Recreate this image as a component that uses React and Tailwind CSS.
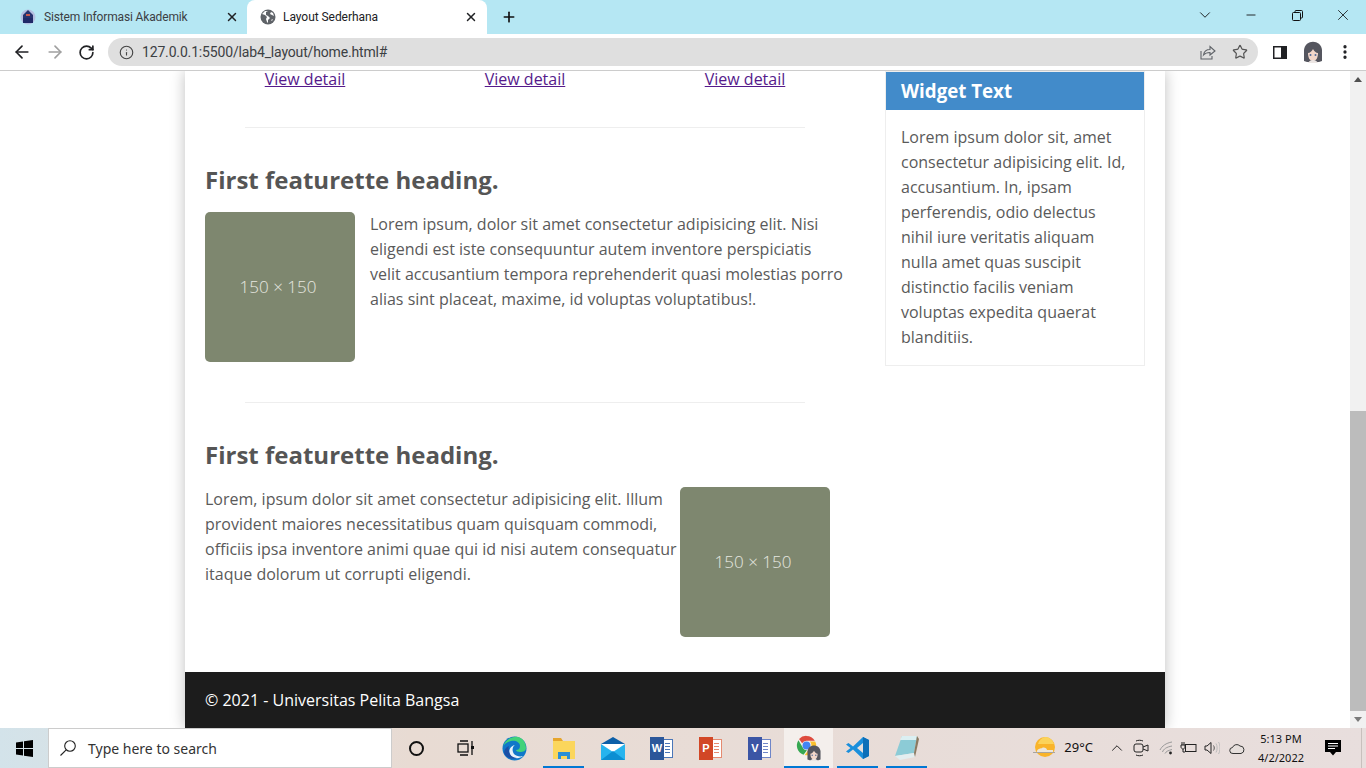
import React from 'react';
import { ArrowLeft, ArrowRight, RotateCw, Info, Star, X, Plus, Minus, ChevronDown, ChevronUp, EllipsisVertical } from 'lucide-react';

const Avatar = ({ size = 22 }) => (
	<svg width={size} height={size} viewBox="0 0 22 22">
		<path d="M2 20V9C3 -2 19 -2 20 9v11l-3 1H5z" fill="#55565f" />
		<path d="M6 12c2 0 4-2 5-4 1 2 3 4 5 4 0 5-2 8-5 8s-5-3-5-8z" fill="#f2d6c9" />
		<path d="M6 22c1-2 3-3 5-3s4 1 5 3z" fill="#ece6e4" />
		<circle cx="8.500" cy="14" r="1" fill="#4f6a9a" />
		<circle cx="13.500" cy="14" r="1" fill="#4f6a9a" />
	</svg>
);

const Globe = () => (
	<svg width="16" height="16" viewBox="0 0 16 16">
		<circle cx="8" cy="8" r="7.500" fill="#5f6368" />
		<path d="M2 5l3 1 2 2-1 2 1 3 1 1V11l2-2-2-2-2-1V3l2-1H5zM11 3l-1 2 2 1 2 1-1-3zM11 11l1 1 1-2z" fill="#fff" />
	</svg>
);

const CampusLogo = () => (
	<svg width="16" height="16" viewBox="0 0 16 16">
		<circle cx="8" cy="8" r="7.500" fill="#b4bfe0" />
		<path d="M8 1L3 6v3h10V6z" fill="#28336e" />
		<rect x="3" y="9" width="10" height="5" fill="#202a68" />
		<rect x="6" y="5" width="4" height="2" fill="#c9584e" />
	</svg>
);

const ShareIcon = () => (
	<svg width="16" height="16" viewBox="0 0 16 16" fill="none" stroke="#5f6368" strokeWidth="1.100">
		<path d="M1 7v8h11v-3" />
		<path d="M3.500 11c.5-3 3-5.500 6.500-5.500V2.500l5 4.500-5 4V8.500c-3 0-5 .8-6.500 2.500z" />
	</svg>
);

const SidePanelIcon = () => (
	<svg width="14" height="13" viewBox="0 0 14 13">
		<rect width="14" height="13" fill="#202124" />
		<rect x="1.500" y="1.500" width="6.500" height="10" fill="#fff" />
	</svg>
);

const RestoreIcon = () => (
	<svg width="11" height="11" viewBox="0 0 11 11" fill="none" stroke="#111" strokeWidth="1">
		<rect x="0.500" y="2.500" width="8" height="8" rx="1" />
		<path d="M3 2.500V1.500a1 1 0 011-1h5.500a1 1 0 011 1V7a1 1 0 01-1 1h-1" />
	</svg>
);

const WindowsLogo = () => (
	<svg width="17" height="17" viewBox="0 0 17 17" fill="#000">
		<path d="M0 2.400L7 1.400V8H0zM8 1.200L17 0V8H8zM0 9h7v6.600l-7-1zM8 9h9v8l-9-1.200z" />
	</svg>
);

const SearchGlass = () => (
	<svg width="16" height="16" viewBox="0 0 16 16" fill="none" stroke="#222" strokeWidth="1.100">
		<circle cx="10" cy="6" r="5.300" />
		<path d="M6.200 9.800L0.500 15.500" />
	</svg>
);

const TaskView = () => (
	<svg width="18" height="16" viewBox="0 0 18 16" fill="none" stroke="#111" strokeWidth="1.300">
		<rect x="1" y="4" width="10" height="8" />
		<path d="M3 1h8M3 15h8M15 1v14" />
		<rect x="14" y="6" width="3" height="3" fill="#111" stroke="none" />
	</svg>
);

const EdgeIcon = () => (
	<svg width="25" height="25" viewBox="0 0 25 25">
		<circle cx="12.500" cy="12.500" r="12" fill="#0f78c9" />
		<path d="M1 11C3 3 11 0 16 1c5 1 8 6 8 11 0 3-3 4-6 4-2 0-4-1-4-2 2 0 4-1 4-4 0-4-5-6-9-5C5 6 2 8 1 11z" fill="#41d27a" />
		<path d="M8 19c-2-4 0-9 5-10-3 2-3 6-1 9 2 2 6 3 9 2-3 3-10 3-13-1z" fill="#fff" opacity=".9" />
		<path d="M7 14c0 5 4 8 8 8-5 2-11 0-13-5 0-3 2-6 5-7-1 2 0 3 0 4z" fill="#1b4fa5" />
	</svg>
);

const FolderIcon = () => (
	<svg width="22" height="21" viewBox="0 0 22 21">
		<path d="M0 0h8l2 3H0z" fill="#e6a52c" />
		<rect y="3" width="22" height="18" fill="#fbd65c" />
		<path d="M5 21v-7h12v7h-3v-3H8v3z" fill="#2a8fd6" />
	</svg>
);

const MailIcon = () => (
	<svg width="24" height="23" viewBox="0 0 24 23">
		<path d="M0 7L12 0l12 7v1H0z" fill="#0c5fa8" />
		<path d="M0 7h24v16H0z" fill="#27b4ee" />
		<path d="M0 7l12 8 12-8z" fill="#fff" />
		<path d="M0 23l12-9 12 9z" fill="#0c8ed2" />
	</svg>
);

// Word, PowerPoint and Visio share the same tile shape
const OfficeIcon = ({ letter, tile, sheet, line }) => (
	<div className="relative w-[23px] h-[23px]">
		<div className={`absolute right-0 top-[2px] w-[15px] h-[19px] bg-white border ${sheet} flex flex-col items-end justify-center gap-[2px] pr-[2px]`}>
			<div className={`w-[5px] h-[1px] ${line}`} />
			<div className={`w-[5px] h-[1px] ${line}`} />
			<div className={`w-[5px] h-[1px] ${line}`} />
			<div className={`w-[5px] h-[1px] ${line}`} />
		</div>
		<div className={`absolute left-0 top-0 w-[14px] h-[23px] ${tile} text-white text-[11px] font-bold flex items-center justify-center font-['Liberation_Sans',sans-serif]`}>
			{letter}
		</div>
	</div>
);

const ChromeIcon = () => (
	<div className="relative w-[26px] h-[26px]">
		<svg width="21" height="21" viewBox="0 0 24 24" className="absolute left-0 top-0">
			<path d="M12 1a11 11 0 019.500 5.500H12a5.500 5.500 0 00-5 3L3.500 4.500A11 11 0 0112 1z" fill="#de4b3e" />
			<path d="M2.800 6L7.500 14a5.500 5.500 0 005 3.400L8.600 22.500A11 11 0 012.800 6z" fill="#36a852" />
			<path d="M22 7.500a11 11 0 01-12 15.400l4.800-6.600a5.500 5.500 0 001-8.800z" fill="#fbc02d" />
			<circle cx="12" cy="12" r="4.500" fill="#4285f4" />
		</svg>
		<div className="absolute right-0 bottom-0">
			<Avatar size={16} />
		</div>
	</div>
);

const VSCodeIcon = () => (
	<svg width="24" height="24" viewBox="0 0 24 24">
		<path d="M17 1l6 3v16l-6 3-10-9.500L2.500 17 0 15.500 4.500 12 0 8.500 2.500 7 7 10.500z" fill="#1a8fdc" />
		<path d="M17 1l6 3v16l-6 3z" fill="#0d6fb8" />
		<path d="M17 7v10l-6-5z" fill="#e6e0de" />
	</svg>
);

const NotepadIcon = () => (
	<svg width="25" height="24" viewBox="0 0 25 24">
		<path d="M8 0h15l-3 17L1 20z" fill="#8ccbd6" />
		<path d="M8 0h15l-1 4L6 4z" fill="#dbeff2" />
		<path d="M1 20l19-3 1 4-15 3z" fill="#e3eef0" />
		<path d="M23 0l2 3-4 18-1-4z" fill="#8a7a62" />
	</svg>
);

const WeatherIcon = () => (
	<svg width="22" height="22" viewBox="0 0 22 22">
		<circle cx="12" cy="10" r="10" fill="#f9b42a" />
		<path d="M12 0a10 10 0 019 7H5a10 10 0 017-7z" fill="#fbd35a" />
		<path d="M0 15h22v1H0z" fill="#a9a49c" />
		<path d="M4 14c1-3 4-2 5-3 2-1 5 0 5 2h6v2H4z" fill="#ebe6dc" />
	</svg>
);

const MeetIcon = () => (
	<svg width="16" height="18" viewBox="0 0 16 18" fill="none" stroke="#222" strokeWidth="1">
		<rect x="1" y="5" width="9" height="8" rx="2" />
		<path d="M10 8l5-2v6l-5-2M3 2c2-1 5-1 7 0M3 16c2 1 5 1 7 0" />
	</svg>
);

const WifiIcon = () => (
	<svg width="14" height="14" viewBox="0 0 14 14" fill="none" stroke="#999" strokeWidth="1">
		<path d="M1 9c2-4 6-7 12-8M3.500 11c1-3 4-5 9.500-6M6 12.500c1-2 3-3 7-4" />
		<circle cx="11.500" cy="12" r="1.400" fill="#222" stroke="none" />
	</svg>
);

const BatteryIcon = () => (
	<svg width="17" height="12" viewBox="0 0 17 12" fill="none" stroke="#222" strokeWidth="1">
		<rect x="5.500" y="2.500" width="10.500" height="7" />
		<path d="M1 3v2c0 1 1 2 2 2s2-1 2-2V3zM2 0v3M4 0v3M3 7v3h2" />
	</svg>
);

const VolumeIcon = () => (
	<svg width="16" height="14" viewBox="0 0 16 14" fill="none" stroke="#222" strokeWidth="1">
		<path d="M1 5v4h2l4 3.500v-11L3 5z" />
		<path d="M9.500 4.500c1 1.500 1 3.500 0 5" stroke="#555" />
		<path d="M12 2.500c1.500 2.500 1.500 6.500 0 9M14.500 1c2 3 2 9 0 12" stroke="#bbb" />
	</svg>
);

const CloudIcon = () => (
	<svg width="16" height="11" viewBox="0 0 16 11" fill="#e6dfdc" stroke="#333" strokeWidth="1">
		<path d="M4 10.500a3 3 0 01-.5-6A4.500 4.500 0 0111 3a3.800 3.800 0 011 7.500z" />
	</svg>
);

const NotificationIcon = () => (
	<svg width="16" height="16" viewBox="0 0 16 16">
		<path d="M0 0h16v12h-5l-3 3.500L5 12H0z" fill="#000" />
		<path d="M3 3.500h10M3 6h10M3 8.500h7" stroke="#fff" strokeWidth="1" />
	</svg>
);

const Placeholder = () => (
	<div className="w-[150px] h-[150px] shrink-0 bg-[#7e876f] rounded-[5px] flex items-center justify-center pr-[4px] pb-[2px] text-[#e6e8e0] text-[17px] font-light">
		150 × 150
	</div>
);

const Featurette = ({ children }) => (
	<>
		<hr className="w-[560px] mx-auto border-0 border-t border-[#eeeeee]" />
		<h2 className="mt-[37px] mb-[18px] text-[24px] leading-[29px] font-bold text-[#555555]">First featurette heading.</h2>
		{children}
	</>
);

const TaskItem = ({ active, open, children }) => (
	<div className={`w-[49px] h-full relative flex items-center justify-center ${active ? 'bg-[#f4efec]' : ''}`}>
		{children}
		{open && <div className={`absolute bottom-0 right-[4px] h-[2px] bg-[#0078d4] ${active ? 'left-0' : 'left-[4px]'}`} />}
	</div>
);

export default function App() {
	return (
		<div className="h-screen w-[1366px] overflow-hidden flex flex-col bg-white font-['Open_Sans',sans-serif]">
			{/* tab strip */}
			<div className="h-[34px] shrink-0 bg-[#b5e7f3] flex items-end text-[12px] text-[#202124] font-['Roboto',sans-serif]">
				<div className="w-[247px] h-[34px] flex items-center pl-[20px] pr-[8px]">
					<CampusLogo />
					<span className="ml-[8px] flex-1 text-[#3c4043] tracking-[-0.15px]">Sistem Informasi Akademik</span>
					<X size={14} strokeWidth={2.5} />
				</div>
				<div className="w-[240px] h-[34px] bg-white rounded-t-[8px] flex items-center pl-[13px] pr-[9px]">
					<Globe />
					<span className="ml-[7px] flex-1 tracking-[-0.05px]">Layout Sederhana</span>
					<X size={14} strokeWidth={2.5} />
				</div>
				<div className="h-[34px] w-[44px] flex items-center justify-center">
					<Plus size={16} strokeWidth={2.5} color="#111" />
				</div>
				<div className="flex-1 h-[30px] self-start flex items-center justify-end">
					<div className="w-[46px] flex justify-center"><ChevronDown size={18} strokeWidth={1.2} color="#111" /></div>
					<div className="w-[46px] flex justify-center"><Minus size={14} strokeWidth={1.5} color="#111" /></div>
					<div className="w-[46px] flex justify-center"><RestoreIcon /></div>
					<div className="w-[46px] flex justify-center"><X size={18} strokeWidth={1.1} color="#111" /></div>
				</div>
			</div>

			{/* toolbar */}
			<div className="h-[37px] shrink-0 border-b border-[#cccccc] flex items-center">
				<div className="w-[108px] flex items-center pl-[12px]">
					<ArrowLeft size={20} strokeWidth={2} color="#202124" />
					<ArrowRight size={20} strokeWidth={2} color="#a0a0a0" className="ml-[13px]" />
					<RotateCw size={17} strokeWidth={2.4} color="#202124" className="ml-[13px]" />
				</div>
				<div className="w-[1150px] h-[28px] bg-[#dfdfdf] rounded-full flex items-center pl-[11px] pr-[10px] text-[14px] text-[#3c4043] font-['Roboto',sans-serif]">
					<Info size={15} strokeWidth={1.8} color="#444" />
					<span className="ml-[8px] flex-1 tracking-[-0.16px]">127.0.0.1:5500/lab4_layout/home.html#</span>
					<ShareIcon />
					<Star size={16} strokeWidth={1.8} color="#555" className="ml-[16px]" />
				</div>
				<div className="flex-1 flex items-center pl-[15px]">
					<SidePanelIcon />
					<div className="ml-[15px]"><Avatar /></div>
					<EllipsisVertical size={18} strokeWidth={2.4} color="#202124" className="ml-[12px]" />
				</div>
			</div>

			{/* page + scrollbar */}
			<div className="h-[657px] shrink-0 flex">
				<div className="w-[1350px] overflow-hidden">
					<div className="w-[980px] mx-auto bg-white shadow-[0_0_14px_rgba(0,0,0,0.25)] h-full flex flex-col text-[16px] leading-[25px] text-[#5a5a5a]">
						<div className="flex flex-1">
							<main className="w-[640px] ml-[20px]">
								<div className="-mx-[10px] grid grid-cols-3 text-center leading-[17px] mb-[39px]">
									<a href="#" className="underline text-[#551a8b]">View detail</a>
									<a href="#" className="underline text-[#551a8b]">View detail</a>
									<a href="#" className="underline text-[#551a8b]">View detail</a>
								</div>
								<Featurette>
									<div className="flex gap-[15px]">
										<Placeholder />
										<p>Lorem ipsum, dolor sit amet consectetur adipisicing elit. Nisi eligendi est iste consequuntur autem inventore perspiciatis velit accusantium tempora reprehenderit quasi molestias porro alias sint placeat, maxime, id voluptas voluptatibus!.</p>
									</div>
								</Featurette>
								<div className="mt-[40px]">
									<Featurette>
										<div className="flex pr-[15px]">
											<p className="flex-1">Lorem, ipsum dolor sit amet consectetur adipisicing elit. Illum provident maiores necessitatibus quam quisquam commodi, officiis ipsa inventore animi quae qui id nisi autem consequatur itaque dolorum ut corrupti eligendi.</p>
											<Placeholder />
										</div>
									</Featurette>
								</div>
							</main>
							<aside className="w-[260px] ml-[40px] self-start border border-[#eeeeee]">
								<h3 className="h-[38px] bg-[#428bca] text-white text-[18.72px] font-bold pl-[15px] pb-[1px] flex items-center">Widget Text</h3>
								<p className="p-[15px]">Lorem ipsum dolor sit, amet consectetur adipisicing elit. Id, accusantium. In, ipsam perferendis, odio delectus nihil iure veritatis aliquam nulla amet quas suscipit distinctio facilis veniam voluptas expedita quaerat blanditiis.</p>
							</aside>
						</div>
						<footer className="h-[56px] shrink-0 bg-[#1c1c1c] text-white flex items-center pl-[20px]">© 2021 - Universitas Pelita Bangsa</footer>
					</div>
				</div>
				<div className="w-[16px] bg-[#f1f1f1] flex flex-col items-center">
					<div className="h-[340px] w-full">
						<div className="w-0 h-0 mx-auto mt-[6px] border-x-[4px] border-x-transparent border-b-[5px] border-b-[#505050]" />
					</div>
					<div className="w-full h-[300px] bg-[#bcbcbc]" />
					<div className="flex-1 w-full flex items-end pb-[6px]">
						<div className="w-0 h-0 mx-auto border-x-[4px] border-x-transparent border-t-[5px] border-t-[#7a7a7a]" />
					</div>
				</div>
			</div>

			{/* taskbar */}
			<div className="h-[40px] shrink-0 flex items-center bg-gradient-to-r from-[#d3e3ea] via-[#e8dbd3] via-30% to-[#e8dedd] font-['Noto_Sans',sans-serif] text-[#111]">
				<div className="w-[48px] flex justify-center"><WindowsLogo /></div>
				<div className="w-[344px] h-full bg-white border border-[#cccccc] flex items-center pl-[11px] text-[14px] text-[#333]">
					<SearchGlass />
					<span className="ml-[12px]">Type here to search</span>
				</div>
				<div className="flex h-full">
					<TaskItem><div className="w-[15px] h-[15px] rounded-full border-2 border-[#111]" /></TaskItem>
					<TaskItem><TaskView /></TaskItem>
					<TaskItem><EdgeIcon /></TaskItem>
					<TaskItem open><FolderIcon /></TaskItem>
					<TaskItem><MailIcon /></TaskItem>
					<TaskItem><OfficeIcon letter="W" tile="bg-[#2b579a]" sheet="border-[#4a76b8]" line="bg-[#4a76b8]" /></TaskItem>
					<TaskItem><OfficeIcon letter="P" tile="bg-[#d24726]" sheet="border-[#e58a70]" line="bg-[#e58a70]" /></TaskItem>
					<TaskItem><OfficeIcon letter="V" tile="bg-[#3b55a5]" sheet="border-[#6f86c8]" line="bg-[#6f86c8]" /></TaskItem>
					<TaskItem active open><ChromeIcon /></TaskItem>
					<TaskItem open><VSCodeIcon /></TaskItem>
					<TaskItem open><NotepadIcon /></TaskItem>
				</div>
				<div className="flex-1 h-full flex items-center justify-end">
					<WeatherIcon />
					<span className="ml-[9px] text-[13px]">29°C</span>
					<ChevronUp size={18} strokeWidth={1.2} className="ml-[15px]" />
					<div className="ml-[7px]"><MeetIcon /></div>
					<div className="ml-[10px]"><WifiIcon /></div>
					<div className="ml-[7px]"><BatteryIcon /></div>
					<div className="ml-[7px]"><VolumeIcon /></div>
					<div className="ml-[9px]"><CloudIcon /></div>
					<div className="w-[52px] ml-[10px] text-center text-[11px] leading-[19px]">
						<div>5:13 PM</div>
						<div>4/2/2022</div>
					</div>
					<div className="w-[54px] pl-[18px]"><NotificationIcon /></div>
					<div className="w-[5px] h-full border-l border-[#c8c0bd]" />
				</div>
			</div>
		</div>
	);
}
